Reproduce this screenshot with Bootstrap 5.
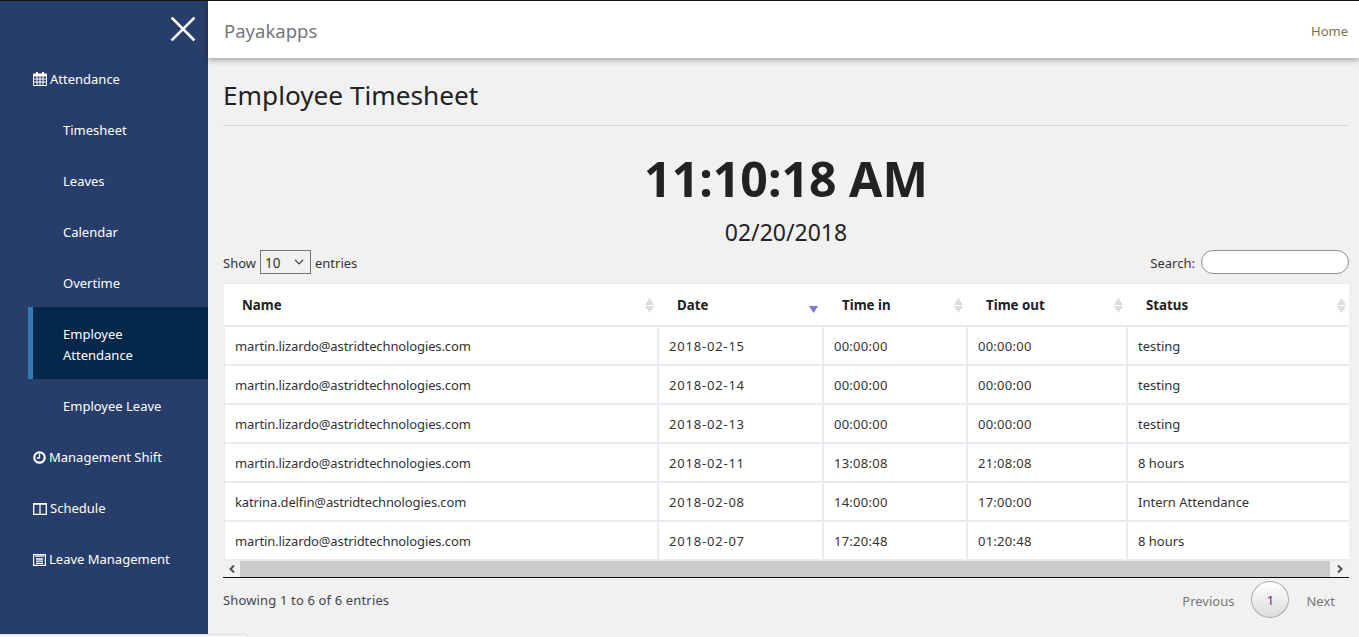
<!DOCTYPE html>
<html lang="en">
<head>
<meta charset="utf-8">
<title>Employee Timesheet</title>
<link rel="stylesheet" href="https://cdn.jsdelivr.net/npm/bootstrap@5.3.0/dist/css/bootstrap.min.css">
<style>
html,body{height:637px;overflow:hidden}
body{font-family:"Noto Sans","Open Sans",sans-serif;font-size:13px;color:#333;background:#f1f1f1;border-top:1px solid #111}
.shell{height:636px}
.side{width:208px;height:633px;background:#273e6a;flex:none}
.closer{height:53px;padding:15px 12px 0 0}
.side-list{padding-left:28px}
.side-link{display:block;color:#fff;text-decoration:none;line-height:21px;padding:15px 20px 15px 5px;font-size:13px}
.side-link svg{vertical-align:-2px;margin-right:3px}
.side-sub{padding-left:35px}
.side-on{background:#05274a;border-left:5px solid #337ab7;padding:17px 20px 13px 30px;margin:-2px 0 2px}
.stage{min-width:0}
.topper{height:57px;background:#fff;box-shadow:0 2px 6px rgba(0,0,0,.35);padding:2px 11px 0 16px;position:relative}
.brandname{font-size:18.5px;color:#777}
.homelink{font-size:13px;color:#8a6d4b;text-decoration:none;margin-top:2px}
.work{padding:0 10px 0 15px}
.pagetitle{font-size:26.2px;font-weight:400;color:#222;line-height:36px;margin:19px 0 12px}
.rule{border-top:1px solid #d5d5d5;opacity:1;margin:0}
.clock{font-size:48.2px;font-weight:700;color:#222;line-height:62px;margin-top:21px}
.datetext{font-size:23px;color:#222;line-height:30px;margin-top:8px}
.toolbar{height:24px;margin-top:3px;margin-bottom:9px;font-size:13px}
.toolbar-label{padding-top:4px}
.pick{width:51px;height:24px;padding:2px 18px 0 4px;font-size:13.5px;border:1px solid #767676;border-radius:0;background-color:#f1f1f1;background-position:right 5px center;background-size:12px 10px;color:#333;margin:0 4px 0 4px}
.seek{width:148px;height:24px;border:1px solid #8f8f8f;border-radius:12px;background:#fff;margin-left:6px;padding:0 10px}
.sheet{width:1125px;margin:0 0 0 1px;table-layout:fixed;border-collapse:separate;border-spacing:0;background:#fff}
.sheet th{height:44px;padding:2px 3px 0 20px;font-size:13.3px;font-weight:700;color:#222;background:#fff;border-top:1px solid #eaeaea;border-bottom:2px solid #e8ecf1;vertical-align:middle}
.sheet th:first-child{padding-left:18px}
.sheet td{height:39px;padding:1px 10px 0;font-size:13px;line-height:18px;color:#333;background:#fff;border-bottom:2px solid #e8ecf1;border-left:2px solid #e8ecf1;vertical-align:middle;white-space:nowrap}
.sheet td:first-child{border-left:1px solid #e8ecf1;letter-spacing:-.12px}
.cell-date{letter-spacing:.8px}
.cell-time{letter-spacing:.25px}
.headflex{display:flex;justify-content:space-between;align-items:center}
.downonly{margin:7px 1px 0 0}
.scroller{width:1126px;height:16px;background:#f1f1f1;border-bottom:1px solid #111;box-sizing:content-box}
.scroll-start{width:17px;flex:none}
.scroll-end{width:19px;flex:none}
.scroll-thumb{background:#cbcbcb;height:16px}
.tablefoot{height:42px;font-size:13px;color:#444}
.foot-info{padding-top:4px;letter-spacing:.15px}
.pagers{width:auto}
.pager-text{color:#777;text-decoration:none;font-size:13px;padding-top:5px}
.pager-last{margin-right:14px}
.pager-num{width:38px;height:37px;border:1px solid #a9a9a9;border-radius:50%;background:linear-gradient(#fff,#dcdcdc);color:#5b2a6e;font-size:13px;margin:0 17px;padding-top:4px}
.statusline{width:247px;height:3px;background:#f6f6f6;border-top:1px solid #dedede;border-right:1px solid #dedede;position:fixed;left:0;bottom:0}
</style>
</head>
<body>
<div class="shell d-flex">
  <aside class="side">
    <div class="closer d-flex justify-content-end">
      <svg width="26" height="26" viewBox="0 0 26 26" aria-hidden="true"><path d="M2.5 2.5 23.5 23.5M23.5 2.5 2.5 23.5" stroke="#fff" stroke-width="2.6" stroke-linecap="square"/></svg>
    </div>
    <nav class="side-list">
      <a class="side-link" href="#"><svg width="14" height="14" viewBox="0 0 14 14" aria-hidden="true"><path fill="#fff" fill-rule="evenodd" d="M3 0h2v1.500h4V0h2v1.500h2q1 0 1 1v10.500q0 1-1 1H1q-1 0-1-1V2.500q0-1 1-1h2zM1 4.500V6.500h2.500v-2zM4.500 4.500v2H6.500v-2zM7.500 4.500v2h2v-2zM10.500 4.500v2H13v-2zM1 7.500v2h2.500v-2zM4.500 7.500v2h2v-2zM7.500 7.500v2h2v-2zM10.500 7.500v2H13v-2zM1 10.500V13h2.500v-2.500zM4.500 10.500V13h2v-2.500zM7.500 10.500V13h2v-2.500zM10.500 10.500V13H13v-2.500z"/></svg>Attendance</a>
      <a class="side-link side-sub" href="#">Timesheet</a>
      <a class="side-link side-sub" href="#">Leaves</a>
      <a class="side-link side-sub" href="#">Calendar</a>
      <a class="side-link side-sub" href="#">Overtime</a>
      <a class="side-link side-sub side-on" href="#">Employee Attendance</a>
      <a class="side-link side-sub" href="#">Employee Leave</a>
      <a class="side-link" href="#"><svg width="13" height="13" viewBox="0 0 13 13" aria-hidden="true"><circle cx="6.500" cy="6.500" r="5.200" fill="none" stroke="#fff" stroke-width="2.200"/><path d="M6.500 3v4H4" fill="none" stroke="#fff" stroke-width="1.300"/></svg>Management Shift</a>
      <a class="side-link" href="#"><svg width="14" height="12" viewBox="0 0 14 12" aria-hidden="true"><path fill="none" stroke="#fff" stroke-width="1.300" d="M.7.700h12.600v10.600H.7zM7 .7v10.600"/><path stroke="#fff" stroke-width="1.500" d="M0 1h14"/></svg>Schedule</a>
      <a class="side-link" href="#"><svg width="13" height="12" viewBox="0 0 13 12" aria-hidden="true"><path fill="none" stroke="#fff" stroke-width="1.200" d="M.6.600h11.800v10.800H.6z"/><path stroke="#fff" stroke-width="1.300" d="M2 2.200h9M3 5h7M3 7.200h7M3 9.400h7"/></svg>Leave Management</a>
    </nav>
  </aside>
  <main class="stage flex-grow-1">
    <header class="topper d-flex justify-content-between align-items-center">
      <span class="brandname">Payakapps</span>
      <a class="homelink" href="#">Home</a>
    </header>
    <div class="work">
      <h1 class="pagetitle">Employee Timesheet</h1>
      <hr class="rule">
      <div class="clock text-center">11:10:18 AM</div>
      <div class="datetext text-center">02/20/2018</div>
      <div class="toolbar d-flex justify-content-between align-items-center">
        <div class="d-flex align-items-center"><span class="toolbar-label">Show</span><select class="form-select pick" aria-label="entries"><option>10</option></select><span class="toolbar-label">entries</span></div>
        <div class="d-flex align-items-center"><span class="toolbar-label">Search:</span><input class="seek" type="text" aria-label="Search"></div>
      </div>
      <table class="sheet">
        <colgroup><col style="width:433px"><col style="width:165px"><col style="width:144px"><col style="width:160px"><col style="width:223px"></colgroup>
        <thead><tr>
          <th><div class="headflex">Name<svg width="9" height="15" viewBox="0 0 9 15"><path fill="#dcdcdc" d="M4.500 0 9 7H0zM0 8h9l-4.500 7z"/></svg></div></th>
          <th><div class="headflex">Date<svg class="downonly" width="9" height="7" viewBox="0 0 9 7"><path fill="#7b7bd6" d="M0 0h9L4.500 7z"/></svg></div></th>
          <th><div class="headflex">Time in<svg width="9" height="15" viewBox="0 0 9 15"><path fill="#dcdcdc" d="M4.500 0 9 7H0zM0 8h9l-4.500 7z"/></svg></div></th>
          <th><div class="headflex">Time out<svg width="9" height="15" viewBox="0 0 9 15"><path fill="#dcdcdc" d="M4.500 0 9 7H0zM0 8h9l-4.500 7z"/></svg></div></th>
          <th><div class="headflex">Status<svg width="9" height="15" viewBox="0 0 9 15"><path fill="#dcdcdc" d="M4.500 0 9 7H0zM0 8h9l-4.500 7z"/></svg></div></th>
        </tr></thead>
        <tbody>
          <tr><td>martin.lizardo@astridtechnologies.com</td><td class="cell-date">2018-02-15</td><td class="cell-time">00:00:00</td><td class="cell-time">00:00:00</td><td>testing</td></tr>
          <tr><td>martin.lizardo@astridtechnologies.com</td><td class="cell-date">2018-02-14</td><td class="cell-time">00:00:00</td><td class="cell-time">00:00:00</td><td>testing</td></tr>
          <tr><td>martin.lizardo@astridtechnologies.com</td><td class="cell-date">2018-02-13</td><td class="cell-time">00:00:00</td><td class="cell-time">00:00:00</td><td>testing</td></tr>
          <tr><td>martin.lizardo@astridtechnologies.com</td><td class="cell-date">2018-02-11</td><td class="cell-time">13:08:08</td><td class="cell-time">21:08:08</td><td>8 hours</td></tr>
          <tr><td>katrina.delfin@astridtechnologies.com</td><td class="cell-date">2018-02-08</td><td class="cell-time">14:00:00</td><td class="cell-time">17:00:00</td><td>Intern Attendance</td></tr>
          <tr><td>martin.lizardo@astridtechnologies.com</td><td class="cell-date">2018-02-07</td><td class="cell-time">17:20:48</td><td class="cell-time">01:20:48</td><td>8 hours</td></tr>
        </tbody>
      </table>
      <div class="scroller d-flex">
        <div class="scroll-start d-flex align-items-center justify-content-center"><svg width="6" height="8" viewBox="0 0 6 8"><path d="M5 .5 1.500 4 5 7.500" fill="none" stroke="#505050" stroke-width="2"/></svg></div>
        <div class="scroll-thumb flex-grow-1"></div>
        <div class="scroll-end d-flex align-items-center justify-content-center"><svg width="6" height="8" viewBox="0 0 6 8"><path d="M1 .5 4.500 4 1 7.500" fill="none" stroke="#505050" stroke-width="2"/></svg></div>
      </div>
      <div class="tablefoot d-flex justify-content-between align-items-center">
        <span class="foot-info">Showing 1 to 6 of 6 entries</span>
        <div class="pagers d-flex align-items-center"><a class="pager-text" href="#">Previous</a><span class="pager-num d-flex align-items-center justify-content-center">1</span><a class="pager-text pager-last" href="#">Next</a></div>
      </div>
    </div>
  </main>
</div>
<div class="statusline"></div>
<script src="https://cdn.jsdelivr.net/npm/bootstrap@5.3.0/dist/js/bootstrap.bundle.min.js"></script>
</body>
</html>
